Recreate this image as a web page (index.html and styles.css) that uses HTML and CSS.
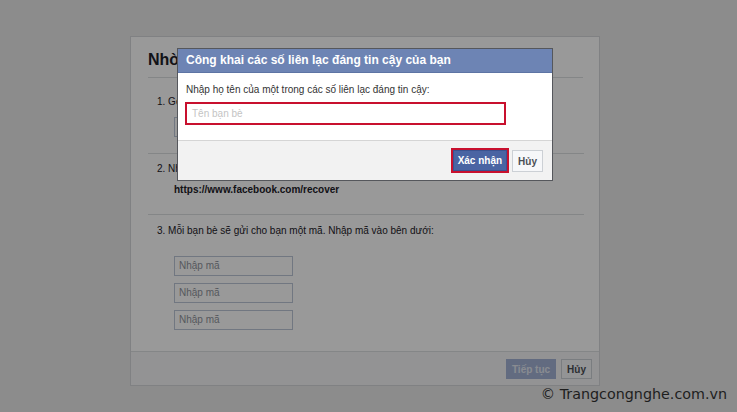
FILE: index.html
```html
<!DOCTYPE html>
<html lang="vi">
<head>
<meta charset="utf-8">
<title>Công khai các số liên lạc đáng tin cậy</title>
<link rel="stylesheet" href="styles.css">
</head>
<body>
<div class="card">
  <h2 class="card-title">Nhờ bạn bè trợ giúp</h2>
  <div class="section s1">
    <p class="step">1. Gọi cho bạn bè của bạn để nhận mã</p>
    <div class="field wide"></div>
  </div>
  <div class="section s2">
    <p class="step">2. Nhờ họ truy cập vào liên kết bên dưới:</p>
    <p class="url">https://www.facebook.com/recover</p>
  </div>
  <div class="section s3">
    <p class="step">3. Mỗi bạn bè sẽ gửi cho bạn một mã. Nhập mã vào bên dưới:</p>
    <div class="codes">
      <div class="field">Nhập mã</div>
      <div class="field">Nhập mã</div>
      <div class="field">Nhập mã</div>
    </div>
  </div>
  <div class="card-foot">
    <span class="btn btn-primary disabled">Tiếp tục</span>
    <span class="btn">Hủy</span>
  </div>
</div>

<div class="overlay"></div>

<div class="dialog">
  <div class="dialog-head">Công khai các số liên lạc đáng tin cậy của bạn</div>
  <div class="dialog-body">
    <p class="label">Nhập họ tên của một trong các số liên lạc đáng tin cậy:</p>
    <div class="name-input">Tên bạn bè</div>
  </div>
  <div class="dialog-foot">
    <span class="hl"><span class="btn btn-primary">Xác nhận</span></span>
    <span class="btn">Hủy</span>
  </div>
</div>

<div class="watermark">© Trangcongnghe.com.vn</div>
</body>
</html>
```

FILE: styles.css
```css
html, body {
  margin: 0;
  padding: 0;
}
body {
  width: 737px;
  height: 412px;
  overflow: hidden;
  background: #e9e9e9;
  font-family: "Liberation Sans", Arial, sans-serif;
  font-size: 10px;
  color: #1d2129;
  position: relative;
}
p { margin: 0; }

.card {
  margin: 36px 0 0 130px;
  width: 468px;
  height: 348px;
  background: #fff;
  border: 1px solid #d6d7da;
  display: flex;
  flex-direction: column;
}
.card-title {
  margin: 0 16px 0 17px;
  padding: 13px 0 0;
  height: 27px;
  font-size: 16px;
  line-height: 20px;
  font-weight: bold;
  border-bottom: 1px solid #dddfe2;
}
.section {
  margin: 0 15px 0 17px;
  padding-left: 9px;
  border-bottom: 1px solid #dddfe2;
}
.step, .url {
  line-height: 16px;
}
.url {
  font-weight: bold;
  padding-left: 17px;
  margin-top: 5px;
}
.s1 { padding-top: 16px; padding-bottom: 16px; }
.s1 .field { margin-top: 7px; }
.s2 { padding-top: 7px; padding-bottom: 16px; }
.s3 { padding-top: 8px; flex: 1; border-bottom: 0; }

.field {
  box-sizing: border-box;
  width: 119px;
  height: 20px;
  margin-left: 17px;
  border: 1px solid #bdc7d8;
  background: #fff;
  color: #90949c;
  font-size: 10px;
  line-height: 18px;
  padding-left: 4px;
}
.field.wide { width: 200px; }
.codes {
  margin-top: 17px;
  display: flex;
  flex-direction: column;
  gap: 7px;
}

.card-foot {
  border-top: 1px solid #dddfe2;
  background: #f5f6f7;
  padding: 7px 7px 6px;
  display: flex;
  justify-content: flex-end;
  gap: 5px;
}

.btn {
  box-sizing: border-box;
  display: inline-flex;
  align-items: center;
  justify-content: center;
  height: 20px;
  padding: 0 5px;
  border: 1px solid #ccd0d5;
  background: #f6f7f9;
  color: #4b4f56;
  font-weight: bold;
  font-size: 10px;
}
.btn-primary {
  background: #4267b2;
  border-color: #4267b2;
  color: #fff;
}
.btn.disabled {
  background: #a3b3d6;
  border-color: #a3b3d6;
  color: #e4e8f2;
  padding: 0 5px;
}

.overlay {
  position: absolute;
  inset: 0;
  background: rgba(0, 0, 0, 0.4);
}

.dialog {
  position: absolute;
  left: 177px;
  top: 48px;
  width: 376px;
  box-sizing: border-box;
  border: 1px solid #55575c;
  background: #fff;
}
.dialog-head {
  height: 23px;
  background: #6d84b4;
  border-bottom: 1px solid #5d74a4;
  color: #fff;
  font-weight: bold;
  font-size: 12px;
  line-height: 23px;
  padding-left: 8px;
}
.dialog-body {
  padding: 9px 0 0 7px;
  height: 58px;
}
.label {
  line-height: 16px;
  color: #333;
  padding-left: 1px;
}
.name-input {
  box-sizing: border-box;
  margin-top: 4px;
  width: 321px;
  height: 23px;
  border: 2px solid #c8102e;
  color: #c4c4c4;
  line-height: 19px;
  padding-left: 5px;
}
.dialog-foot {
  border-top: 1px solid #d5d5d5;
  background: #f2f2f2;
  height: 40px;
  box-sizing: border-box;
  padding: 7px 9px 0 0;
  display: flex;
  justify-content: flex-end;
  align-items: flex-start;
  gap: 3px;
}
.hl {
  display: inline-flex;
  border: 2px solid #c8102e;
}
.hl .btn {
  height: 21px;
  padding: 0 4px;
  background: #4a64a3;
  border-color: #3b5290;
}
.dialog-foot > .btn {
  height: 22px;
  margin-top: 2px;
  padding: 0 5px;
}

.watermark {
  position: absolute;
  right: 10px;
  top: 385px;
  font-family: "DejaVu Sans", sans-serif;
  font-size: 14.3px;
  line-height: 18px;
  color: #1e1e1e;
}
```
